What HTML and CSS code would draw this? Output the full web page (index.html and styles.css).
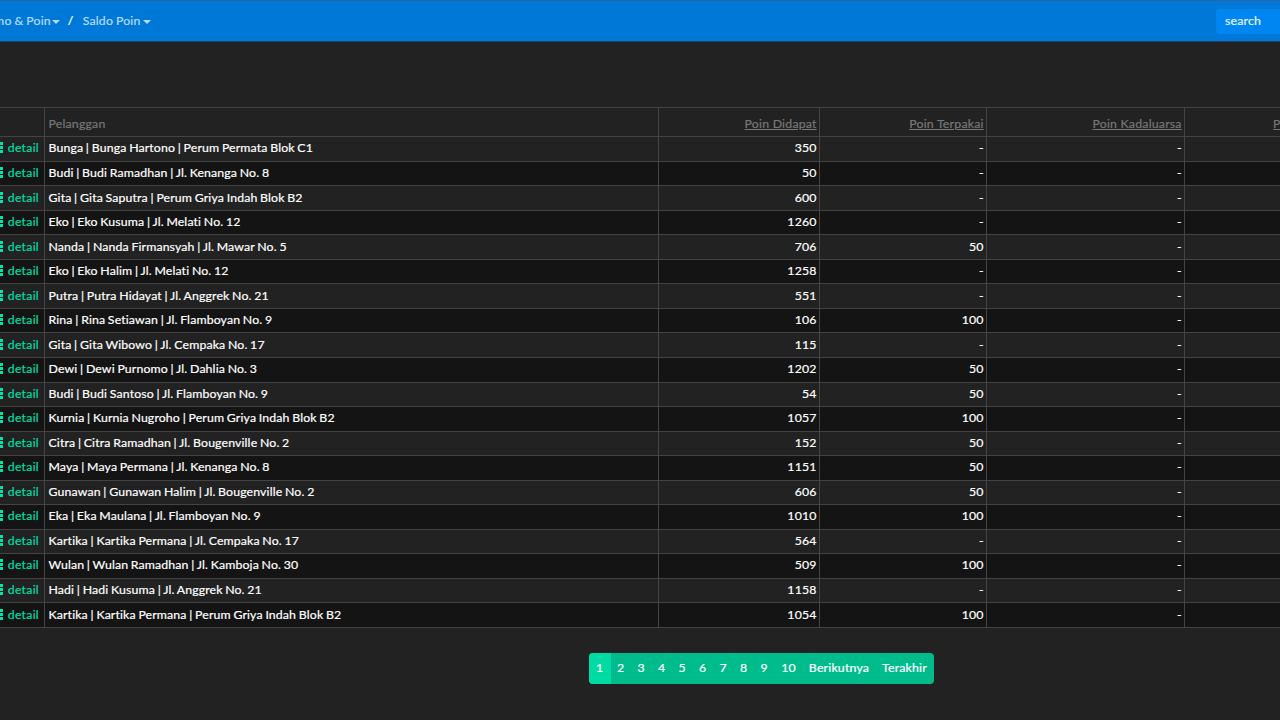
FILE: index.html
```
<!DOCTYPE html>
<html lang="id">

<head>
    <meta charset="UTF-8">
    <meta name="viewport" content="width=device-width, initial-scale=1.0">
    <title>Saldo Poin</title>
    <link rel="stylesheet" href="styles.css">
</head>

<body>
    <svg width="0" height="0" class="sprite">
        <symbol id="list" viewBox="0 0 12 12">
            <path d="M0 0h3v3H0zM4 0h8v3H4zM0 4h3v3H0zM4 4h8v3H4zM0 8h3v3H0zM4 8h8v3H4z" />
        </symbol>
    </svg>

    <nav class="navbar">
        <div class="breadcrumb">
            <a class="dropdown">Promo &amp; Poin<span class="caret"></span></a>
            <span class="divider">/</span>
            <a class="dropdown saldo">Saldo Poin<span class="caret"></span></a>
        </div>
        <button class="search">search</button>
    </nav>

    <main>
        <table class="table">
            <colgroup>
                <col class="col-action">
                <col class="col-name">
                <col class="col-earned">
                <col class="col-used">
                <col class="col-expired">
                <col class="col-total">
            </colgroup>
            <thead>
                <tr><th></th><th>Pelanggan</th><th class="num"><a>Poin Didapat</a></th><th class="num"><a>Poin Terpakai</a></th><th class="num"><a>Poin Kadaluarsa</a></th><th class="num"><a>Poin Saldo</a></th></tr>
            </thead>
            <tbody>
                <tr><td><a class="detail"><svg><use href="#list" /></svg>detail</a></td><td>Bunga | Bunga Hartono | Perum Permata Blok C1</td><td class="num">350</td><td class="num">-</td><td class="num">-</td><td></td></tr>
                <tr><td><a class="detail"><svg><use href="#list" /></svg>detail</a></td><td>Budi | Budi Ramadhan | Jl. Kenanga No. 8</td><td class="num">50</td><td class="num">-</td><td class="num">-</td><td></td></tr>
                <tr><td><a class="detail"><svg><use href="#list" /></svg>detail</a></td><td>Gita | Gita Saputra | Perum Griya Indah Blok B2</td><td class="num">600</td><td class="num">-</td><td class="num">-</td><td></td></tr>
                <tr><td><a class="detail"><svg><use href="#list" /></svg>detail</a></td><td>Eko | Eko Kusuma | Jl. Melati No. 12</td><td class="num">1260</td><td class="num">-</td><td class="num">-</td><td></td></tr>
                <tr><td><a class="detail"><svg><use href="#list" /></svg>detail</a></td><td>Nanda | Nanda Firmansyah | Jl. Mawar No. 5</td><td class="num">706</td><td class="num">50</td><td class="num">-</td><td></td></tr>
                <tr><td><a class="detail"><svg><use href="#list" /></svg>detail</a></td><td>Eko | Eko Halim | Jl. Melati No. 12</td><td class="num">1258</td><td class="num">-</td><td class="num">-</td><td></td></tr>
                <tr><td><a class="detail"><svg><use href="#list" /></svg>detail</a></td><td>Putra | Putra Hidayat | Jl. Anggrek No. 21</td><td class="num">551</td><td class="num">-</td><td class="num">-</td><td></td></tr>
                <tr><td><a class="detail"><svg><use href="#list" /></svg>detail</a></td><td>Rina | Rina Setiawan | Jl. Flamboyan No. 9</td><td class="num">106</td><td class="num">100</td><td class="num">-</td><td></td></tr>
                <tr><td><a class="detail"><svg><use href="#list" /></svg>detail</a></td><td>Gita | Gita Wibowo | Jl. Cempaka No. 17</td><td class="num">115</td><td class="num">-</td><td class="num">-</td><td></td></tr>
                <tr><td><a class="detail"><svg><use href="#list" /></svg>detail</a></td><td>Dewi | Dewi Purnomo | Jl. Dahlia No. 3</td><td class="num">1202</td><td class="num">50</td><td class="num">-</td><td></td></tr>
                <tr><td><a class="detail"><svg><use href="#list" /></svg>detail</a></td><td>Budi | Budi Santoso | Jl. Flamboyan No. 9</td><td class="num">54</td><td class="num">50</td><td class="num">-</td><td></td></tr>
                <tr><td><a class="detail"><svg><use href="#list" /></svg>detail</a></td><td>Kurnia | Kurnia Nugroho | Perum Griya Indah Blok B2</td><td class="num">1057</td><td class="num">100</td><td class="num">-</td><td></td></tr>
                <tr><td><a class="detail"><svg><use href="#list" /></svg>detail</a></td><td>Citra | Citra Ramadhan | Jl. Bougenville No. 2</td><td class="num">152</td><td class="num">50</td><td class="num">-</td><td></td></tr>
                <tr><td><a class="detail"><svg><use href="#list" /></svg>detail</a></td><td>Maya | Maya Permana | Jl. Kenanga No. 8</td><td class="num">1151</td><td class="num">50</td><td class="num">-</td><td></td></tr>
                <tr><td><a class="detail"><svg><use href="#list" /></svg>detail</a></td><td>Gunawan | Gunawan Halim | Jl. Bougenville No. 2</td><td class="num">606</td><td class="num">50</td><td class="num">-</td><td></td></tr>
                <tr><td><a class="detail"><svg><use href="#list" /></svg>detail</a></td><td>Eka | Eka Maulana | Jl. Flamboyan No. 9</td><td class="num">1010</td><td class="num">100</td><td class="num">-</td><td></td></tr>
                <tr><td><a class="detail"><svg><use href="#list" /></svg>detail</a></td><td>Kartika | Kartika Permana | Jl. Cempaka No. 17</td><td class="num">564</td><td class="num">-</td><td class="num">-</td><td></td></tr>
                <tr><td><a class="detail"><svg><use href="#list" /></svg>detail</a></td><td>Wulan | Wulan Ramadhan | Jl. Kamboja No. 30</td><td class="num">509</td><td class="num">100</td><td class="num">-</td><td></td></tr>
                <tr><td><a class="detail"><svg><use href="#list" /></svg>detail</a></td><td>Hadi | Hadi Kusuma | Jl. Anggrek No. 21</td><td class="num">1158</td><td class="num">-</td><td class="num">-</td><td></td></tr>
                <tr><td><a class="detail"><svg><use href="#list" /></svg>detail</a></td><td>Kartika | Kartika Permana | Perum Griya Indah Blok B2</td><td class="num">1054</td><td class="num">100</td><td class="num">-</td><td></td></tr>
            </tbody>
        </table>

        <div class="pagination">
            <a class="active">1</a><a>2</a><a>3</a><a>4</a><a>5</a><a>6</a><a>7</a><a>8</a><a>9</a><a class="ten">10</a><a class="next">Berikutnya</a><a class="last">Terakhir</a>
        </div>
    </main>
</body>

</html>
```
FILE: styles.css
```
* {
    margin: 0;
    padding: 0;
    box-sizing: border-box;
}

body {
    font-family: Lato, sans-serif;
    font-size: 12.3px;
    line-height: 18px;
    letter-spacing: 0.2px;
    -webkit-text-stroke: 0.2px;
    background: #222222;
    color: #ffffff;
    height: 100vh;
    overflow: hidden;
}

.sprite {
    display: block;
}

.navbar {
    display: flex;
    align-items: center;
    justify-content: space-between;
    height: 42px;
    background: #0078d7;
    border-top: 1px solid #2d659c;
    border-bottom: 1px solid #1d4263;
}

.breadcrumb {
    display: flex;
    align-items: center;
    margin-left: -25px;
    white-space: nowrap;
}

.dropdown {
    display: flex;
    align-items: center;
    color: #b5dcff;
    word-spacing: -0.5px;
}

.caret {
    margin: 2px 0 0 1px;
    border-top: 4px solid #b5dcff;
    border-left: 4px solid transparent;
    border-right: 4px solid transparent;
}

.saldo .caret {
    margin-left: 2px;
}

.divider {
    margin: 0 9px 0 8px;
}

.search {
    width: 64px;
    height: 25px;
    padding-left: 9px;
    background: #0086f0;
    border: 0;
    border-radius: 4px 0 0 4px;
    color: #e5f4ff;
    font: inherit;
    letter-spacing: inherit;
    text-align: left;
}

main {
    padding-top: 65px;
}

.table {
    table-layout: fixed;
    width: 1375px;
    margin-left: -40px;
    border-spacing: 0;
    border-bottom: 1px solid #444444;
}

.col-action {
    width: 85px;
}

.col-name {
    width: 614px;
}

.col-earned {
    width: 161px;
}

.col-used {
    width: 167px;
}

.col-expired {
    width: 198px;
}

.table th,
.table td {
    height: 24.54px;
    padding: 0 3px 1px 3.5px;
    border-top: 1px solid #444444;
    border-right: 1px solid #444444;
    text-align: left;
    white-space: nowrap;
}

.table td {
    letter-spacing: 0.13px;
    word-spacing: -0.6px;
}

.table th {
    height: 29.2px;
    padding-top: 5px;
    color: #777777;
    font-weight: 400;
}

.table th a {
    text-decoration: underline;
}

.table tbody tr:nth-child(even) {
    background: #141414;
}

.table .num {
    padding-right: 2.3px;
    letter-spacing: 0.22px;
    text-align: right;
}

.detail {
    display: flex;
    align-items: center;
    justify-content: flex-end;
    gap: 5px;
    padding-right: 2px;
    color: #00dda2;
    letter-spacing: 0.25px;
}

.detail svg {
    width: 12px;
    height: 12px;
    fill: #00e6a8;
}

.pagination {
    display: flex;
    width: 345px;
    height: 31px;
    margin: 25px 0 0 589px;
    background: #00bc8c;
    border-radius: 4px;
    line-height: 30px;
    overflow: hidden;
}

.pagination a {
    width: 20.5px;
    text-align: center;
}

.pagination .active {
    width: 21.5px;
    background: #00dba3;
}

.pagination .ten {
    width: 28px;
}

.pagination .next {
    width: 73px;
}

.pagination .last {
    width: 58px;
}
```
